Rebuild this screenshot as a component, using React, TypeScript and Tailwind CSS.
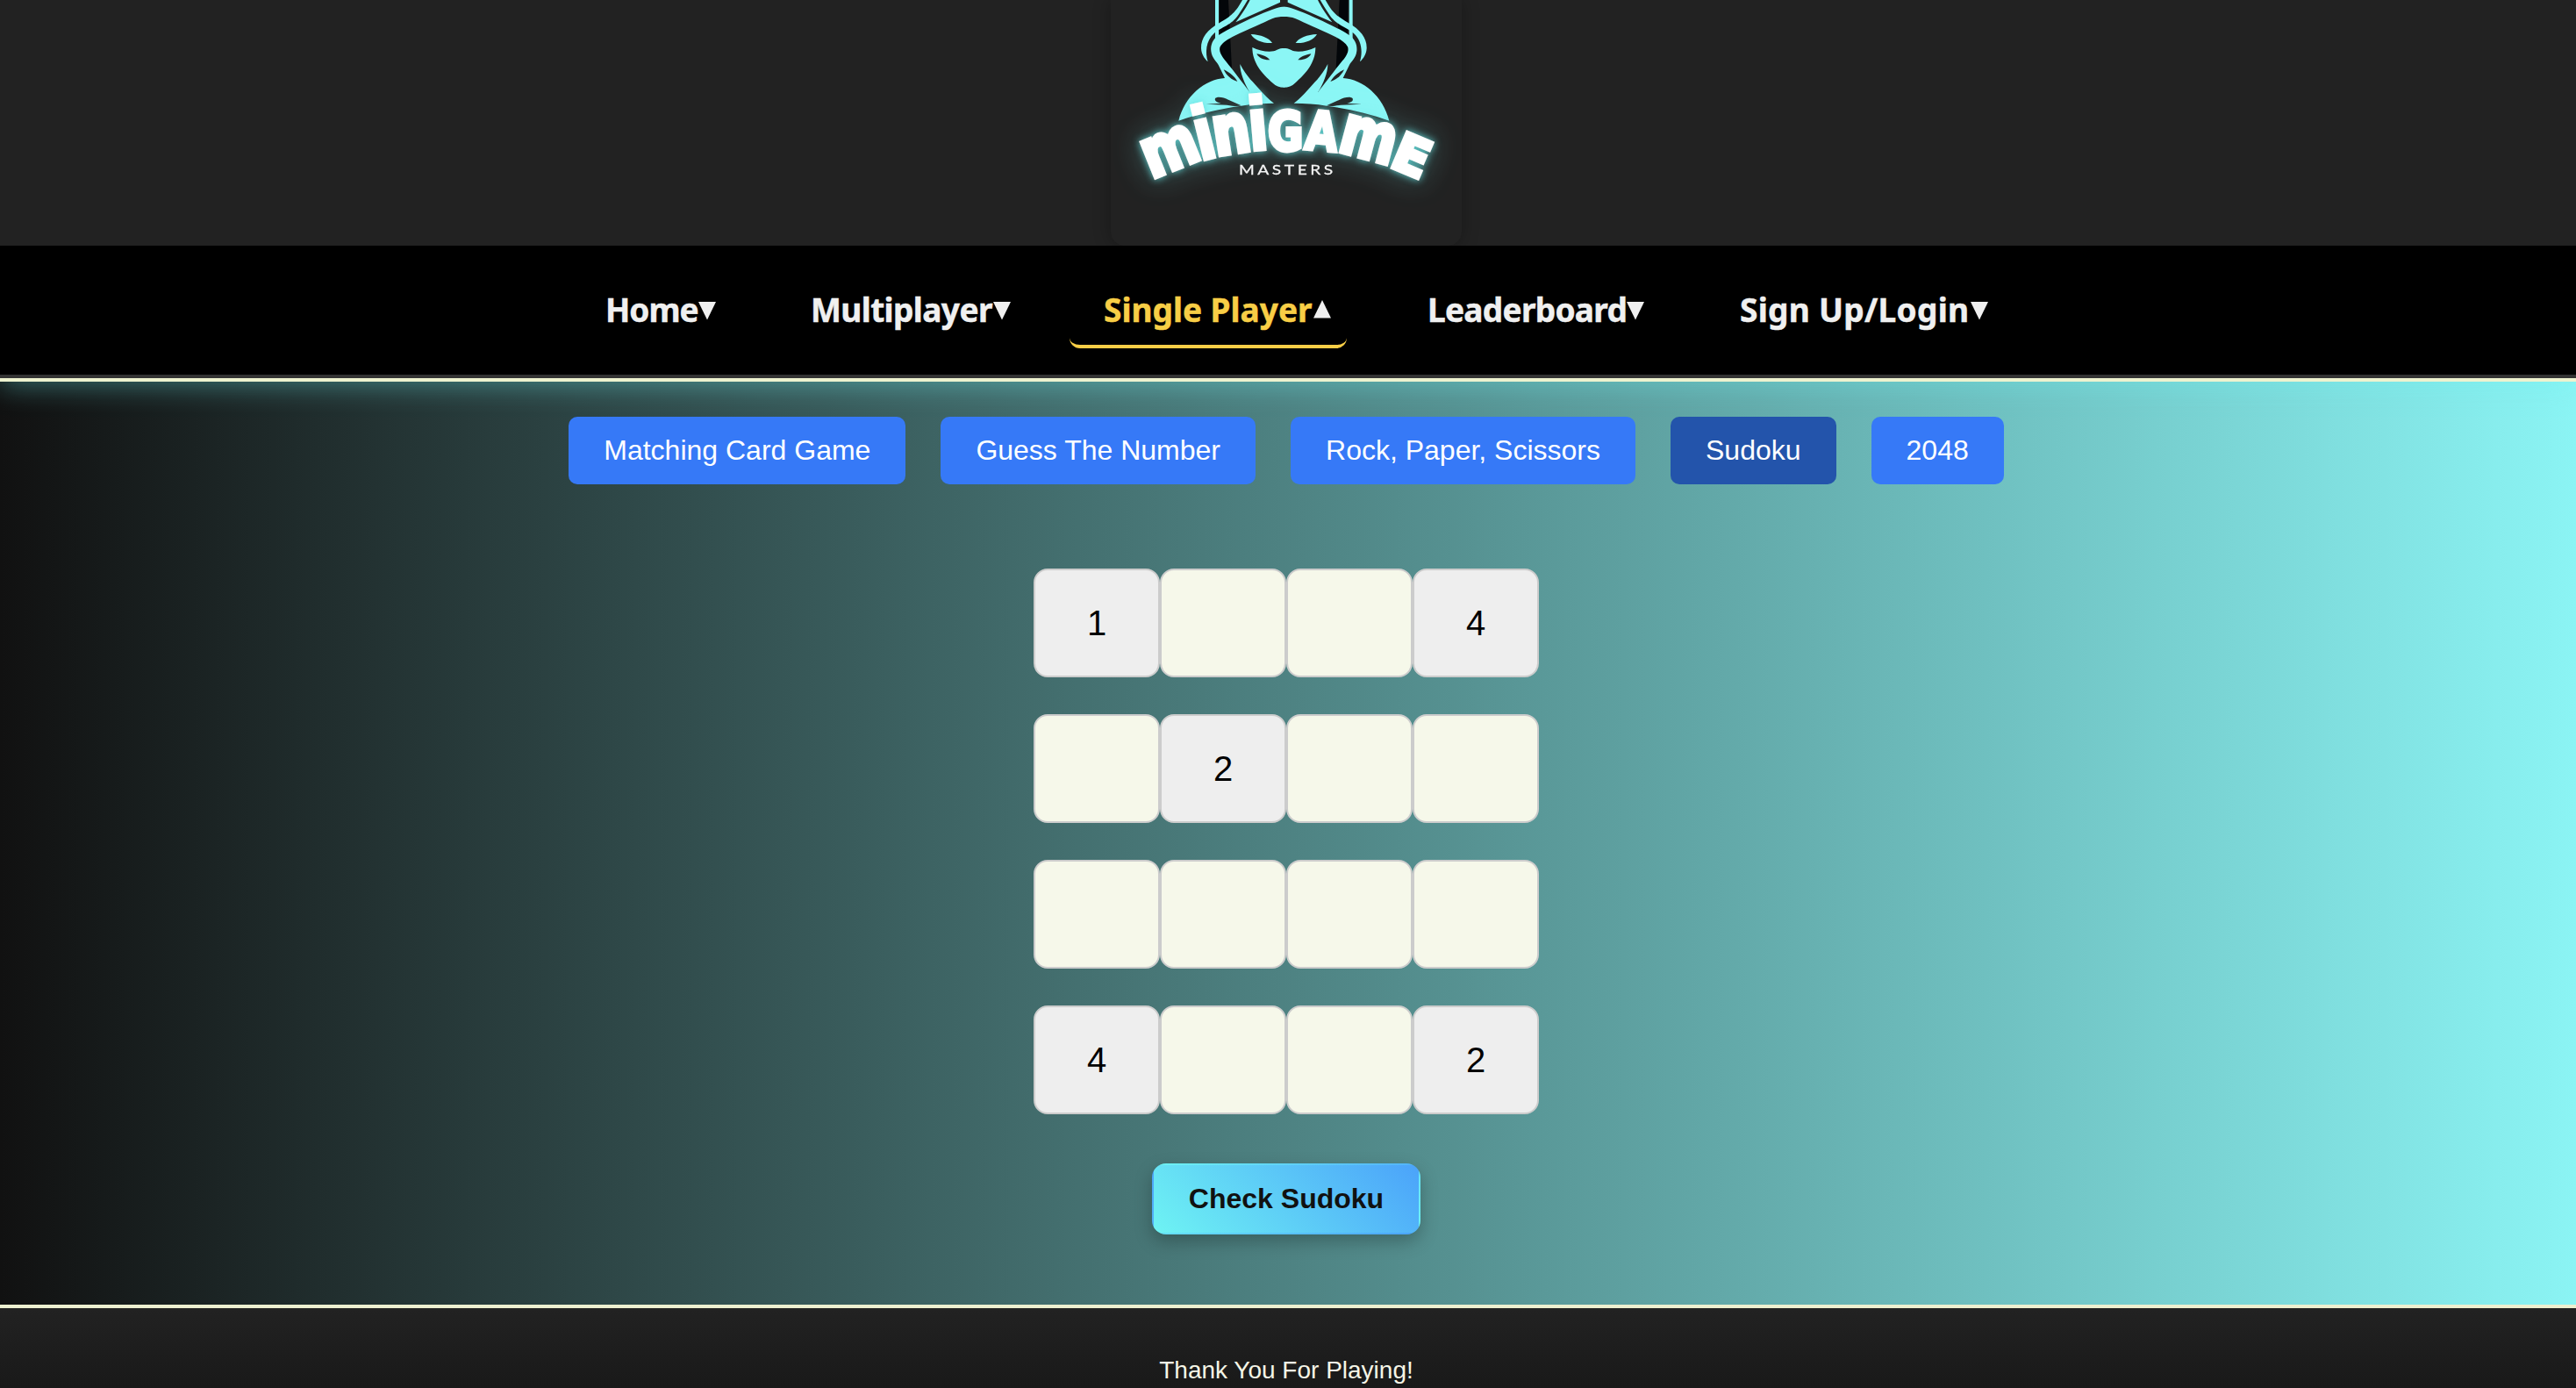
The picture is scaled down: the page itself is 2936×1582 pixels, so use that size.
import React from "react";

const CYAN = "#8bf6f5";

type Glyph = { ch: string; x: number; y: number; r: number; w: number; h: number; inkW: number; inkH: number; st: number };

const glyphs: Glyph[] = [
  { ch: "m", x: 309, y: 583, r: -22, w: 175, h: 146, inkW: 88, inkH: 56, st: 7 },
  { ch: "i", x: 418, y: 547, r: -14, w: 45, h: 146, inkW: 17.5, inkH: 54.7, st: 2 },
  { ch: "n", x: 502, y: 530, r: -9, w: 112, h: 146, inkW: 55, inkH: 56, st: 8 },
  { ch: "i", x: 589, y: 518, r: -5, w: 45, h: 146, inkW: 17.5, inkH: 54.7, st: 2 },
  { ch: "G", x: 676, y: 519, r: 0, w: 114, h: 150, inkW: 70, inkH: 74, st: 8 },
  { ch: "A", x: 793, y: 520, r: 5, w: 120, h: 146, inkW: 77, inkH: 73, st: 7 },
  { ch: "m", x: 940, y: 547, r: 15, w: 175, h: 146, inkW: 88, inkH: 56, st: 7 },
  { ch: "E", x: 1080, y: 597, r: 23, w: 112, h: 144, inkW: 54.5, inkH: 73, st: 8 },
];

function HoodHalf() {
  return (
    <g>
      <path d="M450 0H480L492 235L452 200Z" fill="#030609" />
      <g fill={CYAN}>
        <path d="M435 0H447V135H435Z" />
        <path d="M528 0C505 42 490 55 450 78C408 102 386 130 387 165C388 185 398 200 410 211C401 180 402 140 432 113C465 88 495 85 520 42C532 24 540 10 546 0Z" />
        <path d="M554 0H657V8L505 76C530 45 545 18 554 0Z" />
        <path d="M671 23C655 23 640 28 600 44C540 70 480 98 447 120C425 135 419 155 421 175C424 200 440 210 446 222L468 267C400 270 330 330 310 413C380 388 450 372 524 362C560 355 600 354 636 353C600 325 575 290 556 272C545 258 530 240 520 219C520 250 535 285 553 315C530 285 500 245 470 208C455 190 446 172 452 160C460 145 480 133 500 123C550 100 600 78 630 64C645 58 655 57 671 57Z" />
        <path d="M557 117C590 118 620 130 630 147C600 149 568 138 557 117Z" />
        <path d="M562 162C590 177 632 180 645 171C655 166 662 165 671 165V299C655 299 642 294 632 284C595 252 562 215 562 162Z" />
      </g>
      <g fill="#232525">
        <path d="M464 238C485 248 502 262 511 279C492 273 474 260 464 238Z" />
        <path d="M577 184C600 188 615 196 622 205C602 206 584 199 577 184Z" />
        <path d="M404 356L455 353C440 350 432 345 435 337C441 328 465 333 480 341L524 361C510 365 495 362 475 359Z" />
      </g>
    </g>
  );
}

function Logo() {
  return (
    <svg viewBox="78 0 1200 840" className="block h-[280px] w-[400px]" aria-label="Minigame Masters">
      <defs>
        <filter id="glow" x="-30%" y="-80%" width="160%" height="260%">
          <feGaussianBlur in="SourceGraphic" stdDeviation="12" result="b1" />
          <feGaussianBlur in="SourceGraphic" stdDeviation="50" result="b2" />
          <feFlood floodColor="#62dcdc" floodOpacity="0.95" />
          <feComposite in2="b1" operator="in" result="g1" />
          <feFlood floodColor="#7ff0f0" floodOpacity="0.35" />
          <feComposite in2="b2" operator="in" result="g2" />
          <feMerge>
            <feMergeNode in="g2" />
            <feMergeNode in="g1" />
            <feMergeNode in="SourceGraphic" />
          </feMerge>
        </filter>
      </defs>
      <HoodHalf />
      <g transform="translate(1340 0) scale(-1 1)">
        <HoodHalf />
      </g>
      <path d="M310 415Q490 355 670 355T1030 415L1000 520Q670 570 340 520Z" fill="#222525" />
      <g filter="url(#glow)" fill="#fff" stroke="#fff" strokeLinejoin="miter">
        {glyphs.map((g, i) => {
          const sx = g.w / (g.inkW + g.st);
          const sy = g.h / (g.inkH + g.st);
          return (
            <text
              key={i}
              transform={`translate(${g.x} ${g.y}) rotate(${g.r}) scale(${sx} ${sy}) translate(0 ${-g.st / 2})`}
              textAnchor="middle"
              fontSize="100"
              strokeWidth={g.st}
              fontWeight="700"
              fontFamily="'DejaVu Sans', sans-serif"
            >
              {g.ch}
            </text>
          );
        })}
      </g>
      <text
        transform="translate(516 597) scale(1.2 1)"
        textLength="268"
        fontSize="48"
        fill="#f4f4f4"
        stroke="#f4f4f4"
        strokeWidth="0.8"
        fontFamily="Lato, sans-serif"
      >
        MASTERS
      </text>
    </svg>
  );
}

function Triangle({ up }: { up?: boolean }) {
  return (
    <svg viewBox="0 0 20 21" className={up ? "mt-[-2px] h-[21px] w-5 shrink-0" : "mt-[2px] h-[21px] w-5 shrink-0"}>
      <path d={up ? "M10 0L20 20.5H0Z" : "M0 0H20L10 20.5Z"} fill="#f0f0f0" />
    </svg>
  );
}

const navItems = [
  { label: "Home", box: "w-[183px] ml-[651px] tracking-[-1px]" },
  { label: "Multiplayer", box: "w-[285px] ml-[51px] tracking-[-0.6px]" },
  { label: "Single Player", box: "w-[316px] ml-[49px]", active: true },
  { label: "Leaderboard", box: "w-[304px] ml-[53px] tracking-[-0.7px]" },
  { label: "Sign Up/Login", box: "w-[340px] ml-[52px] tracking-[0.3px]" },
];

const games = ["Matching Card Game", "Guess The Number", "Rock, Paper, Scissors", "Sudoku", "2048"];

const board = [
  ["1", "", "", "4"],
  ["", "2", "", ""],
  ["", "", "", ""],
  ["4", "", "", "2"],
];

export default function App() {
  return (
    <div className="flex h-[1582px] w-[2936px] flex-col overflow-hidden bg-[#222] font-['Liberation_Sans',Arial,sans-serif]">
      <header className="relative z-20 flex h-[280px] shrink-0 justify-center overflow-hidden bg-[#222] pr-1">
        <div className="h-[280px] w-[400px] rounded-2xl rounded-t-none bg-[#222] shadow-[0_0_20px_rgba(0,0,0,0.3)]">
          <Logo />
        </div>
      </header>

      <nav className="relative z-10 flex h-[151px] shrink-0 items-start border-b-4 border-[#333] bg-black pt-[29px] shadow-[0_8px_30px_rgba(110,243,243,0.4)]">
        {navItems.map((n) => (
          <a
            key={n.label}
            className={`flex h-[88px] shrink-0 items-center justify-between whitespace-nowrap rounded-xl border-b-4 pl-[39px] pr-[18px] pt-1 font-['Noto_Sans',sans-serif] text-[37px] font-bold leading-[50px] [-webkit-text-stroke:0.5px] ${n.box} ${
              n.active ? "border-[#f8ce46] text-[#f8ce46]" : "border-transparent text-[#f0f0f0]"
            }`}
          >
            <span>{n.label}</span>
            <Triangle up={n.active} />
          </a>
        ))}
      </nav>

      <div className="relative z-20 h-1 shrink-0 bg-[#edf2cf]" />

      <main className="flex h-[1056px] shrink-0 flex-col items-center border-b-4 border-[#edf0d0] bg-[linear-gradient(to_right,#111,#8bf4f4)] pr-1">
        <div className="mt-10 flex gap-10">
          {games.map((g) => (
            <button
              key={g}
              className={`h-[77px] rounded-[10px] px-10 text-[32px] leading-[37px] text-white ${
                g === "Sudoku" ? "bg-[#2354ab]" : "bg-[#3679f7]"
              }`}
            >
              {g}
            </button>
          ))}
        </div>

        <div className="mt-24 flex flex-col gap-[42px]">
          {board.map((row, r) => (
            <div key={r} className="flex">
              {row.map((v, c) => (
                <div
                  key={c}
                  className={`flex h-[124px] w-36 items-center justify-center rounded-2xl border-2 border-[#ccc] text-[40px] text-black ${
                    v ? "bg-[#eee]" : "bg-[#f6f8ea]"
                  }`}
                >
                  {v}
                </div>
              ))}
            </div>
          ))}
        </div>

        <button className="mt-14 h-[81px] w-[306px] rounded-2xl border-2 border-transparent bg-[linear-gradient(45deg,#6ef3f3,#4ba3fa)] pb-0.5 text-[32px] font-bold text-[#111] shadow-[0_8px_20px_rgba(0,0,0,0.25)]">
          Check Sudoku
        </button>
      </main>

      <footer className="flex h-[91px] shrink-0 justify-center bg-[linear-gradient(to_bottom,#222,#191919)] pr-1 pt-[54px] text-[28px] leading-[34px] text-[#f5f5e6]">
        Thank You For Playing!
      </footer>
    </div>
  );
}
